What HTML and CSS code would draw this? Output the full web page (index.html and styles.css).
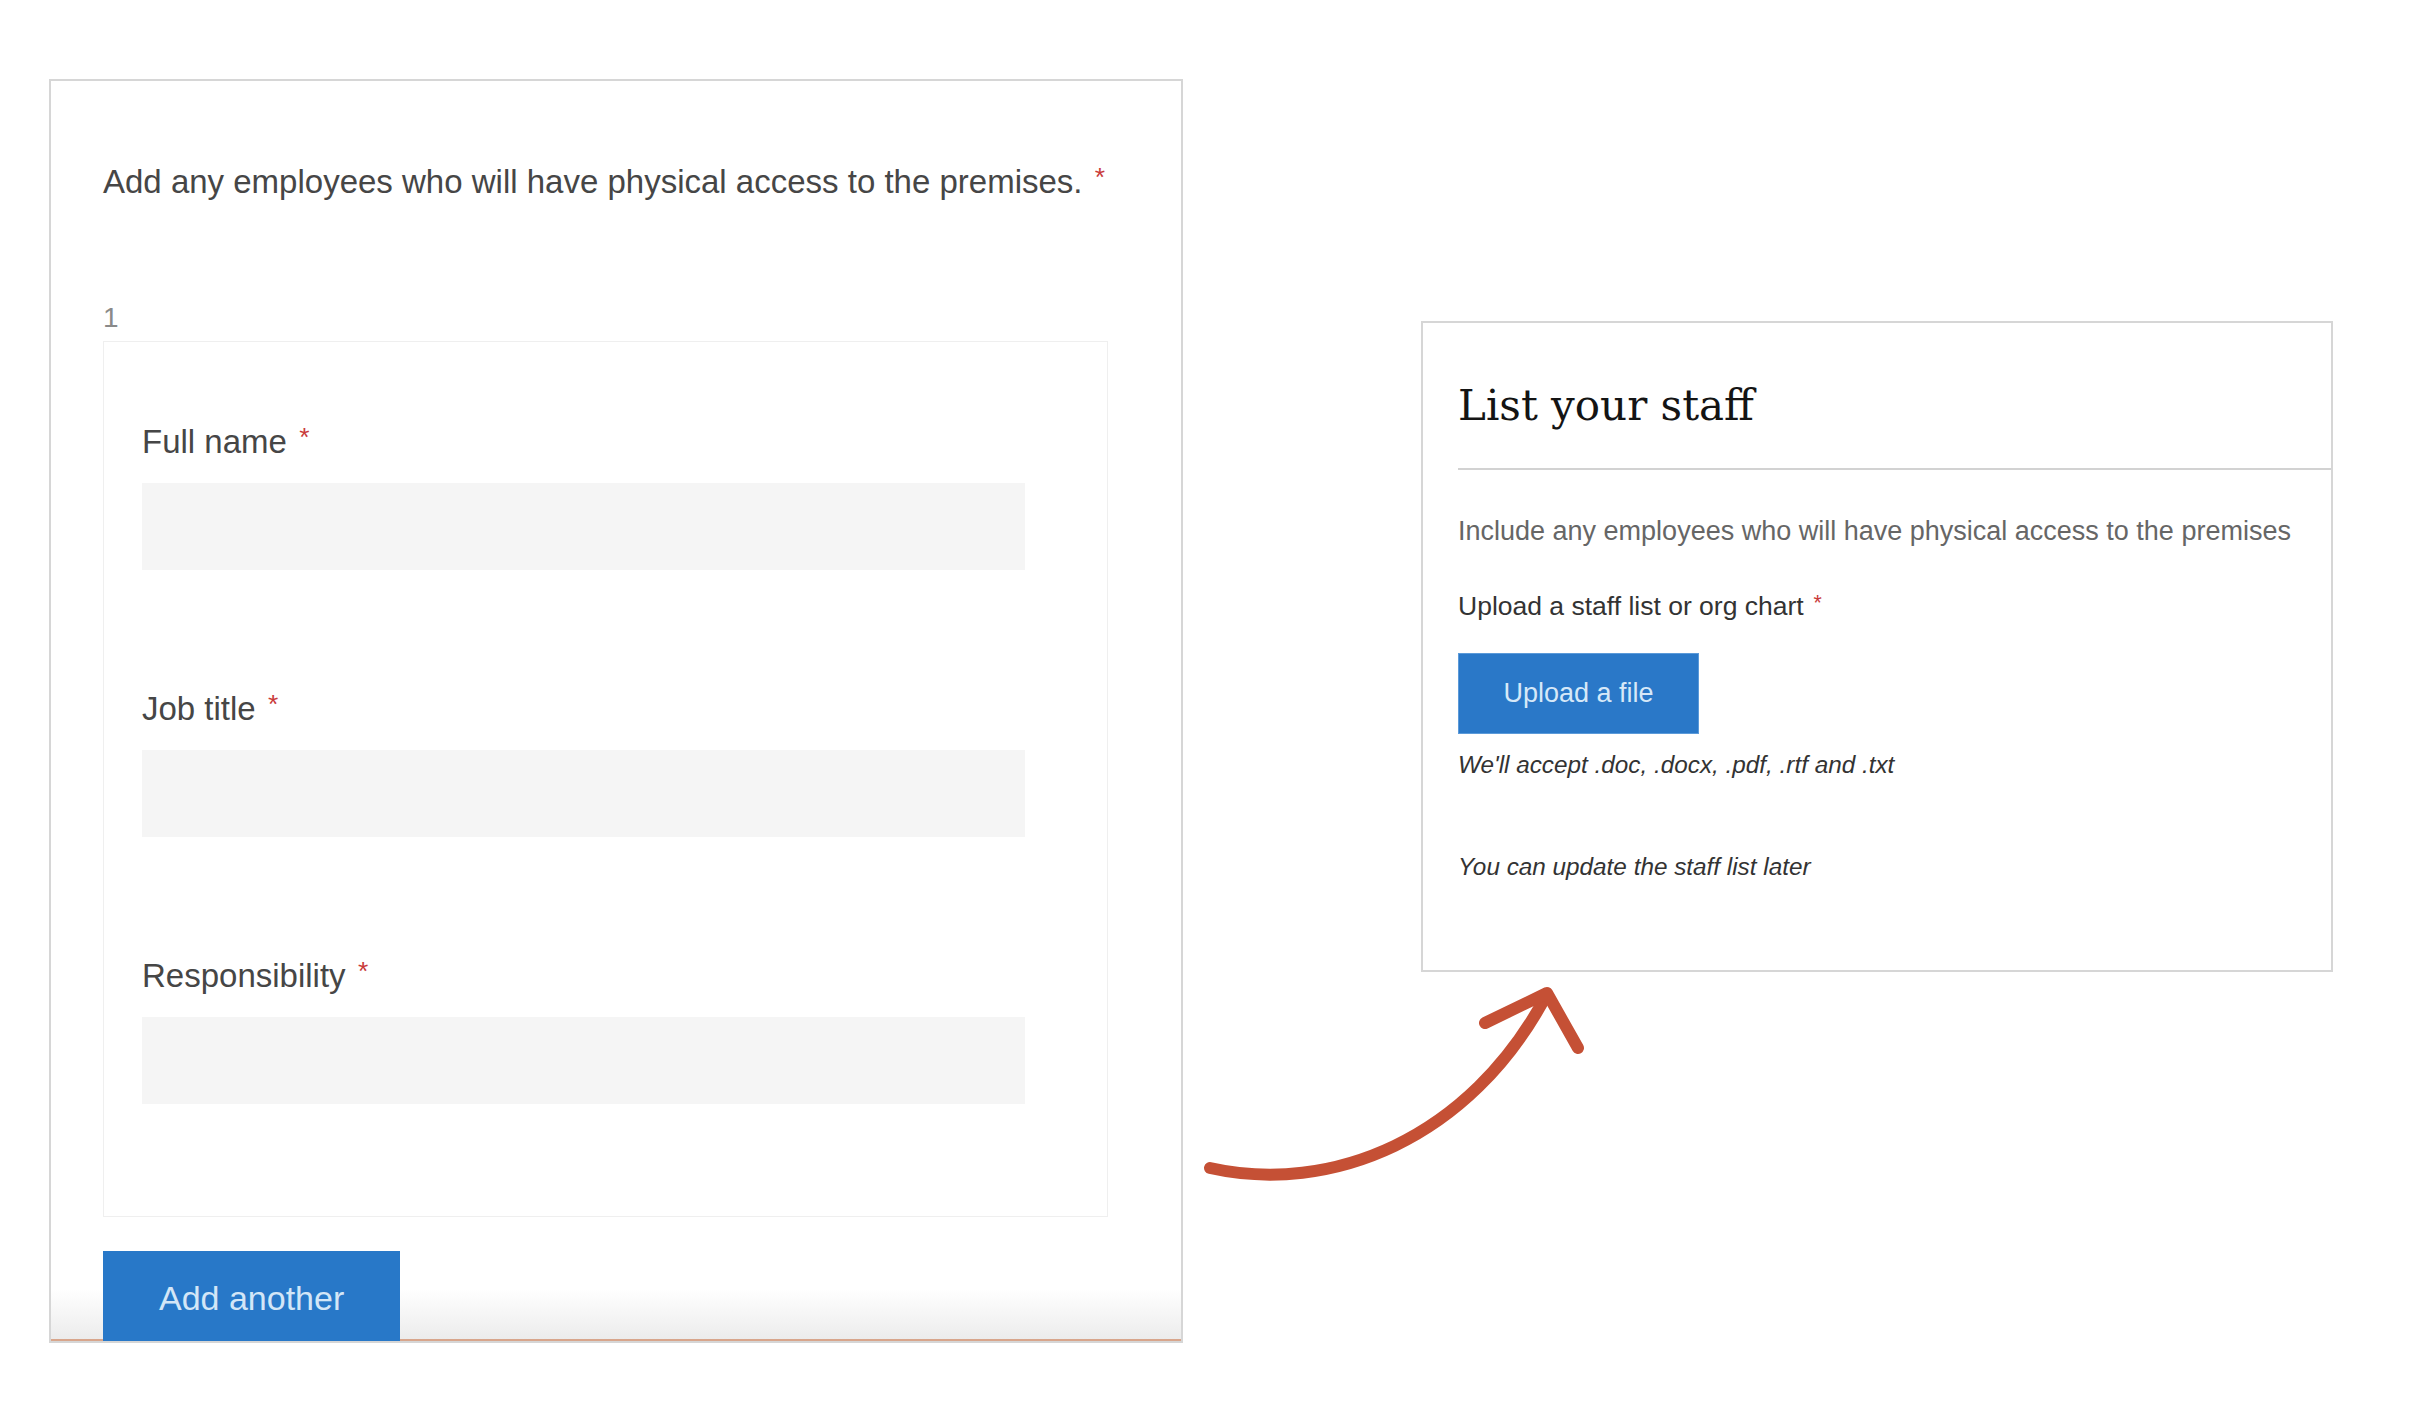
FILE: index.html
```html
<!DOCTYPE html>
<html lang="en">
<head>
<meta charset="utf-8">
<title>List your staff</title>
<link rel="stylesheet" href="styles.css">
</head>
<body>
<div class="stage">
  <section class="old-panel">
    <p class="lead">Add any employees who will have physical access to the premises. <span class="req">*</span></p>
    <div class="item-num">1</div>
    <div class="item-box">
      <div class="field">
        <label class="field-label">Full name <span class="req">*</span></label>
        <div class="field-input"></div>
      </div>
      <div class="field">
        <label class="field-label">Job title <span class="req">*</span></label>
        <div class="field-input"></div>
      </div>
      <div class="field">
        <label class="field-label">Responsibility <span class="req">*</span></label>
        <div class="field-input"></div>
      </div>
    </div>
    <div class="add-btn">Add another</div>
  </section>

  <section class="new-panel">
    <h2 class="title">List your staff</h2>
    <p class="intro">Include any employees who will have physical access to the premises</p>
    <p class="upload-label">Upload a staff list or org chart <span class="req">*</span></p>
    <div class="upload-btn">Upload a file</div>
    <p class="hint first">We'll accept .doc, .docx, .pdf, .rtf and .txt</p>
    <p class="hint second">You can update the staff list later</p>
  </section>

  <svg class="arrow" width="2420" height="1414" viewBox="0 0 2420 1414" aria-hidden="true">
    <path d="M1210 1168 C1330 1195 1470 1140 1547 994" fill="none" stroke="#c55035" stroke-width="12" stroke-linecap="round"/>
    <path d="M1485 1023 L1547 993 L1578 1048" fill="none" stroke="#c55035" stroke-width="12" stroke-linecap="round" stroke-linejoin="round"/>
  </svg>
</div>
</body>
</html>
```

FILE: styles.css
```css
html, body {
  margin: 0;
  padding: 0;
  background: #ffffff;
}

body {
  font-family: "Liberation Sans", Arial, Helvetica, sans-serif;
  width: 2420px;
  height: 1414px;
  overflow: hidden;
}

.stage {
  position: relative;
  display: flex;
  align-items: flex-start;
  gap: 238px;
  padding: 79px 0 0 49px;
}

.req {
  color: #c93a3a;
  font-size: 0.8em;
  line-height: 0;
  vertical-align: 0.25em;
  margin-left: 0.12em;
}

/* ---------- Left (old) panel ---------- */
.old-panel {
  position: relative;
  box-sizing: border-box;
  width: 1134px;
  height: 1264px;
  border: 2px solid #d6d6d6;
  padding: 82px 0 0 52px;
  overflow: hidden;
  background: #ffffff;
}

.old-panel::after {
  content: "";
  position: absolute;
  left: 0;
  right: 0;
  bottom: 0;
  height: 50px;
  background: linear-gradient(to bottom, rgba(238, 238, 238, 0), #ececec);
  border-bottom: 2px solid #d8a68c;
}

.lead {
  margin: 0;
  font-size: 33px;
  line-height: 38px;
  color: #464646;
}

.item-num {
  margin-top: 101px;
  font-size: 28px;
  line-height: 32px;
  color: #8a8a8a;
}

.item-box {
  box-sizing: border-box;
  width: 1005px;
  margin-top: 7px;
  border: 1px solid #efefef;
  padding: 81px 0 112px 38px;
  display: flex;
  flex-direction: column;
  gap: 120px;
}

.field {
  display: flex;
  flex-direction: column;
  gap: 22px;
}

.field-label {
  font-size: 33px;
  line-height: 38px;
  color: #464646;
}

.field-input {
  width: 883px;
  height: 87px;
  background: #f5f5f5;
}

.add-btn {
  position: relative;
  z-index: 1;
  display: inline-block;
  margin-top: 34px;
  padding: 22px 56px 24px;
  font-size: 34px;
  line-height: 50px;
  color: #d3e6f7;
  background: #2878c8;
}

/* ---------- Right (new) panel ---------- */
.new-panel {
  box-sizing: border-box;
  width: 912px;
  margin-top: 242px;
  border: 2px solid #d6d6d6;
  padding: 58px 0 88px 35px;
  background: #ffffff;
}

.title {
  margin: 0;
  padding-bottom: 37px;
  border-bottom: 2px solid #d2d2d2;
  font-family: "DejaVu Serif", "Liberation Serif", Georgia, serif;
  font-weight: normal;
  font-size: 42px;
  line-height: 50px;
  color: #141414;
}

.intro {
  margin: 45px 0 0;
  font-size: 27px;
  line-height: 32px;
  color: #666666;
}

.upload-label {
  margin: 43px 0 0;
  font-size: 26.5px;
  line-height: 32px;
  color: #333333;
}

.upload-btn {
  box-sizing: border-box;
  width: 241px;
  height: 81px;
  margin-top: 31px;
  border: 1px solid #5b9ad9;
  background: #2a78c8;
  color: #d6e8f8;
  font-size: 27px;
  line-height: 79px;
  text-align: center;
}

.hint {
  margin: 0;
  font-size: 24.3px;
  line-height: 30px;
  font-style: italic;
  color: #333333;
}

.hint.first {
  margin-top: 16px;
}

.hint.second {
  margin-top: 72px;
}

/* ---------- Annotation arrow ---------- */
.arrow {
  position: absolute;
  left: 0;
  top: 0;
  pointer-events: none;
}
```
